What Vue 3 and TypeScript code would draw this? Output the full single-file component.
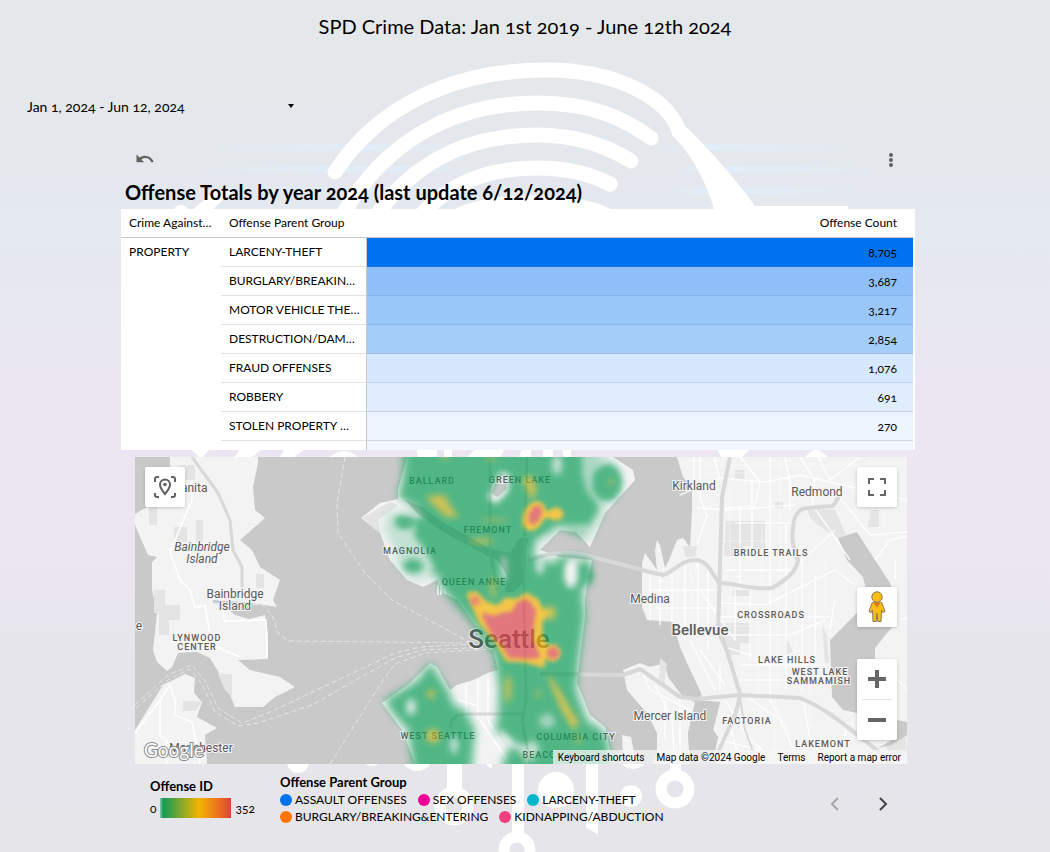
<script setup lang="ts">
interface OffenseRow {
  name: string
  count: string
  shade: string
}

interface LegendItem {
  name: string
  color: string
}

interface MapLabel {
  text: string
  x: number
  y: number
  kind: 'town' | 'area' | 'city' | 'big' | 'island'
}

const rows: OffenseRow[] = [
  { name: 'LARCENY-THEFT', count: '8,705', shade: '#0072f0' },
  { name: 'BURGLARY/BREAKIN…', count: '3,687', shade: '#8ebff8' },
  { name: 'MOTOR VEHICLE THE…', count: '3,217', shade: '#9ac7fa' },
  { name: 'DESTRUCTION/DAM…', count: '2,854', shade: '#a4cdf9' },
  { name: 'FRAUD OFFENSES', count: '1,076', shade: '#d6e8fd' },
  { name: 'ROBBERY', count: '691', shade: '#e0edfd' },
  { name: 'STOLEN PROPERTY …', count: '270', shade: '#ecf5fe' },
  { name: '', count: '', shade: '#f2f7ff' },
]

const legend: LegendItem[] = [
  { name: 'ASSAULT OFFENSES', color: '#0072f0' },
  { name: 'SEX OFFENSES', color: '#f10096' },
  { name: 'LARCENY-THEFT', color: '#00b6cb' },
  { name: 'BURGLARY/BREAKING&ENTERING', color: '#ff7300' },
  { name: 'KIDNAPPING/ABDUCTION', color: '#ef4080' },
]

const labels: MapLabel[] = [
  { text: 'Manita', x: 189, y: 492, kind: 'town' },
  { text: 'Bainbridge', x: 202, y: 551, kind: 'island' },
  { text: 'Island', x: 202, y: 563, kind: 'island' },
  { text: 'Bainbridge', x: 235, y: 598, kind: 'town' },
  { text: 'Island', x: 235, y: 610, kind: 'town' },
  { text: 'e', x: 139, y: 630, kind: 'town' },
  { text: 'LYNWOOD', x: 197, y: 641, kind: 'area' },
  { text: 'CENTER', x: 197, y: 650, kind: 'area' },
  { text: 'Manchester', x: 201, y: 752, kind: 'town' },
  { text: 'BALLARD', x: 432, y: 484, kind: 'area' },
  { text: 'GREEN LAKE', x: 520, y: 483, kind: 'area' },
  { text: 'FREMONT', x: 488, y: 533, kind: 'area' },
  { text: 'MAGNOLIA', x: 410, y: 554, kind: 'area' },
  { text: 'QUEEN ANNE', x: 474, y: 585, kind: 'area' },
  { text: 'Seattle', x: 509, y: 648, kind: 'big' },
  { text: 'WEST SEATTLE', x: 438, y: 739, kind: 'area' },
  { text: 'COLUMBIA CITY', x: 576, y: 740, kind: 'area' },
  { text: 'BEACON HILL', x: 556, y: 758, kind: 'area' },
  { text: 'Kirkland', x: 694, y: 490, kind: 'town' },
  { text: 'Redmond', x: 817, y: 496, kind: 'town' },
  { text: 'BRIDLE TRAILS', x: 771, y: 556, kind: 'area' },
  { text: 'Medina', x: 650, y: 603, kind: 'town' },
  { text: 'CROSSROADS', x: 771, y: 618, kind: 'area' },
  { text: 'Bellevue', x: 700, y: 635, kind: 'city' },
  { text: 'LAKE HILLS', x: 787, y: 663, kind: 'area' },
  { text: 'WEST LAKE', x: 820, y: 675, kind: 'area' },
  { text: 'SAMMAMISH', x: 819, y: 684, kind: 'area' },
  { text: 'Mercer Island', x: 670, y: 720, kind: 'town' },
  { text: 'FACTORIA', x: 747, y: 724, kind: 'area' },
  { text: 'LAKEMONT', x: 823, y: 747, kind: 'area' },
]
</script>

<template>
  <main class="report">
    <svg class="backdrop" viewBox="0 0 1050 852" aria-hidden="true">
      <defs>
        <linearGradient id="streak" x1="0" x2="1" y1="0" y2="0">
          <stop offset="0" stop-color="#e2edf9" stop-opacity="0" />
          <stop offset=".25" stop-color="#e2edf9" />
          <stop offset=".4" stop-color="#e2edf9" stop-opacity="0" />
          <stop offset=".7" stop-color="#e2edf9" stop-opacity="0" />
          <stop offset=".78" stop-color="#e2edf9" />
          <stop offset="1" stop-color="#e2edf9" stop-opacity="0" />
        </linearGradient>
      </defs>
      <g fill="url(#streak)">
        <rect x="210" y="144" width="640" height="7" />
        <rect x="200" y="166" width="680" height="7" />
        <rect x="220" y="187" width="640" height="7" />
      </g>
      <g fill="none" stroke="#fff" stroke-width="15" stroke-linecap="round">
        <path d="M335 172C377 108 450 70 547 70C614 70 663 96 677 126" />
        <path d="M342 216C385 140 455 103 537 103C590 103 622 117 651 138" />
        <path d="M376 216C415 160 470 135 537 135C574 135 604 144 631 161" />
        <path d="M420 216C450 182 490 168 537 168C566 168 589 173 610 184" />
        <path d="M455 217C480 205 505 203 535 203C565 203 590 206 610 217" />
      </g>
      <g fill="#fff">
        <path d="M670 128L683 124C708 148 735 178 755 206H848V212H715C706 180 690 152 672 135Z" />
        <circle cx="181" cy="213" r="8" />
        <path d="M190 212L216 190L236 188L210 212Z" />
        <path d="M191 449H210L201 459ZM240 449H262L250 459H233ZM285 449H305L292 459H278Z" />
        <path d="M328 459Q344 443 360 459ZM416 449H437V459H419ZM444 449H452V459H444ZM475 449H505L499 459H466ZM522 449H531V459H518ZM543 449H553V459H543ZM562 449H571V459H564ZM717 449H750L740 459H722ZM804 459Q816 441 829 459Z" />
        <circle cx="298" cy="762" r="11" />
        <circle cx="372" cy="754" r="12" />
        <circle cx="417" cy="755" r="16" />
        <rect x="447" y="760" width="15" height="32" />
        <path d="M480 760H492V769Z" />
        <rect x="512" y="760" width="12" height="74" />
        <circle cx="556" cy="790" r="18" />
        <path d="M586 760H598V834L586 828Z" />
        <circle cx="633" cy="754" r="15" />
        <circle cx="631" cy="796" r="11" />
        <rect x="670" y="760" width="11" height="18" />
      </g>
      <g fill="none" stroke="#fff" stroke-width="11">
        <circle cx="454" cy="806" r="14" />
        <circle cx="675" cy="789" r="14" />
        <circle cx="517" cy="850" r="13" />
      </g>
    </svg>

    <h1>SPD Crime Data: Jan 1st 2019 - June 12th 2024</h1>

    <button class="date-range" type="button">
      <span>Jan 1, 2024 - Jun 12, 2024</span>
      <svg width="6" height="4" viewBox="0 0 6 4" aria-hidden="true"><path d="M0 0H6L3 4Z" /></svg>
    </button>

    <section class="offenses">
      <div class="toolbar">
        <button type="button" aria-label="Undo drill">
          <svg width="20" height="20" viewBox="0 0 20 20" aria-hidden="true">
            <path d="M1.500 4.500V12.200H9.200L6.300 9.400C10 7 14 7.600 16.600 12.500L18.800 11.700C16 5.500 9.500 4 4.600 7.600Z" fill="#616161" />
          </svg>
        </button>
        <button type="button" aria-label="More options">
          <svg width="20" height="20" viewBox="0 0 20 20" fill="#616161" aria-hidden="true">
            <circle cx="10" cy="5" r="2" /><circle cx="10" cy="10" r="2" /><circle cx="10" cy="15" r="2" />
          </svg>
        </button>
      </div>
      <h2>Offense Totals by year 2024 (last update 6/12/2024)</h2>
      <div class="table-box">
        <table>
          <colgroup><col class="c1" /><col class="c2" /><col /></colgroup>
          <thead>
            <tr><th>Crime Against…</th><th>Offense Parent Group</th><th class="num">Offense Count</th></tr>
          </thead>
          <tbody>
            <tr v-for="(row, i) in rows" :key="i">
              <td v-if="i === 0" class="category" :rowspan="rows.length">PROPERTY</td>
              <td class="group">{{ row.name }}</td>
              <td class="num value" :style="{ backgroundColor: row.shade }">{{ row.count }}</td>
            </tr>
          </tbody>
        </table>
      </div>
    </section>

    <section class="map" aria-label="Offense heat map">
      <svg class="map-canvas" viewBox="135 457 772 307" role="img" aria-label="Map of Seattle">
        <defs>
          <filter id="soft" x="-20%" y="-20%" width="140%" height="140%"><feGaussianBlur stdDeviation="4" /></filter>
          <filter id="softer" x="-50%" y="-50%" width="200%" height="200%"><feGaussianBlur stdDeviation="3" /></filter>
          <filter id="edge" x="-50%" y="-50%" width="200%" height="200%"><feGaussianBlur stdDeviation="2" /></filter>
          <mask id="sparse" maskUnits="userSpaceOnUse" x="135" y="440" width="772" height="340">
            <rect x="135" y="440" width="772" height="340" fill="#fff" />
            <g fill="#000" filter="url(#softer)">
              <path d="M500 472L510 475L508 492L496 504L488 498Z" />
              <path d="M380 508L398 500L424 515L418 520L400 514L394 520L402 528L416 524L414 536L424 548L434 566L430 580L414 588L398 576L388 560L378 535Z" fill-opacity=".7" />
              <path d="M582 452H600L612 460L606 466L594 472L593 490L600 498L612 503L604 515L592 545L578 532L556 526L548 534L550 545L538 550L534 540L560 526L590 524L600 508L592 498L586 490L582 474Z" fill-opacity=".55" />
              <ellipse cx="557" cy="465" rx="5" ry="10" fill-opacity=".7" />
              <ellipse cx="571" cy="573" rx="7" ry="15" />
              <ellipse cx="577" cy="561" rx="9" ry="3" fill-opacity=".7" />
              <ellipse cx="504" cy="568" rx="3" ry="13" fill-opacity=".8" />
              <ellipse cx="540" cy="566" rx="4" ry="8" fill-opacity=".8" />
              <ellipse cx="411" cy="707" rx="5" ry="8" fill-opacity=".8" />
              <ellipse cx="454" cy="745" rx="4" ry="9" fill-opacity=".7" />
              <ellipse cx="547" cy="721" rx="8" ry="7" fill-opacity=".5" />
              <path d="M500 728L514 742L526 745L534 740L540 750L528 764L520 752L500 742Z" fill-opacity=".7" />
            </g>
          </mask>
        </defs>
        <rect x="135" y="457" width="772" height="307" fill="#c9c9c9" />
        <g fill="#f3f3f3">
          <path d="M170 457V490L147 507L135 514V525L148 555L157 557L164 550L152 562V590L157 613L153 650L157 662L167 671L172 667L178 653L197 652L210 658L225 683L235 707H263L275 697L295 687L280 677L250 670L238 660L268 659V633L265 615L249 619L235 615L222 604L213 603V600L245 602L277 607L273 600L280 580L260 567L252 550L240 540L265 518L255 510L253 487L258 463V457Z" />
          <path d="M135 730L163 685L185 674L195 678L194 693L202 702L197 717L217 728L205 735L207 764H135Z" />
          <path d="M407 457L398 490V499L380 503L361 518L380 533L390 560L407 580L423 587L437 580L443 593L457 600L493 650L498 670L488 673L473 680L457 685L450 690L437 667L430 663L410 683L382 703L402 730L415 764H613L605 727L590 715L577 683L585 617V597L592 560L560 557L540 550L560 530L576 532L590 547L605 513L635 480L633 470L613 457Z" />
          <path d="M677 457L683 477L692 487V510L690 547L683 538L677 540L669 560L665 568L660 545L657 540L655 550L657 570L645 553L642 563V607L647 620L673 622L680 647L687 663L695 680L702 695L697 700L720 702L713 730L718 737L712 764H907V457Z" />
          <path d="M623 670L640 663L650 667L665 663L668 677L683 697L695 702L688 733L690 764H652L657 755V733L647 713L638 703L627 690Z" />
          <path d="M622 735L631 737L635 757L623 755Z" />
        </g>
        <g fill="#e4e4e4">
          <path d="M180 465H195V480H180ZM149 505H157V525H149ZM196 520H203V542H196ZM174 527H187V542H174ZM154 590H165V605H180V620H169V635H159V613H154ZM218 674H232V697L225 690ZM183 701H202L196 711H183ZM256 574H264V588H256Z" />
          <path d="M726 521H765V550H752V546H743V556H724ZM683 546H697L695 557H685ZM807 508L835 510L846 535L838 538L825 530L810 518ZM870 510H879V527H868ZM718 623H751V643H740V655H727ZM785 636L795 656H785ZM660 658L667 664L664 685L659 680ZM775 502H783V508H775ZM822 625L827 635L829 663H825ZM735 470H745V480H735ZM733 590H750V596H733ZM885 745L905 730L907 754H890Z" />
          <path d="M362 518L390 502L398 505L378 520L380 533Z" />
        </g>
        <g fill="#c9c9c9">
          <path d="M838 538L857 532L875 560L890 583L897 600L892 627L875 648V660L857 713L843 710L832 697L830 640L860 610L866 589L863 577L847 560Z" />
          <path d="M700 703L720 702L713 730L718 737L712 764H690L688 733Z" />
          <path d="M878 748L892 740L897 720L907 722V735L892 745Z" />
          <path d="M500 473L508 476L506 490L497 497L491 493Z" />
          <path d="M404 499L424 508L442 522L466 535L490 549L510 553L520 538L529 538L522 560L524 582L513 592H505L507 575L497 560L480 552L440 530L416 512Z" />
        </g>
        <g fill="none" stroke="#fff" stroke-width="1.500" stroke-linejoin="round">
          <path d="M192 480V500L170 552L180 580L190 590L195 608L205 605L212 645L240 657M223 603L224 621L266 620L267 657M135 733L160 700L170 685L175 700V715L192 722L200 764M160 700V735L167 740V764M445 586V594M438 585V595M441 585V595" />
          <path stroke-opacity=".85" d="M694 457V480L707 515L697 545M700 457V500M714 457L720 480M680 495L720 478L765 482L800 475L907 500M740 457L760 482L755 506L725 508M697 508L730 510L795 505M770 457V585M752 480V560M740 506V590M800 457L815 480L812 505M818 457L830 480L860 457M838 495L870 535L907 532M790 480V510M785 457L793 500M735 523H790M695 570L700 560M725 570H795M786 525V690M770 555V700M750 590V660M735 590V640L700 590H650M650 575V620M660 575V625M672 575V622M685 563V640M698 565V635M708 565V650M690 640L715 690M700 650L725 685M650 590H715M655 608H718M720 603L765 605L835 570L855 585M720 617H830M720 635H790L825 620M728 648L750 655L765 665L800 650M740 665H825M740 680H828M802 560V690M815 575V680M835 600L830 630M797 565L835 530M875 560L890 540L907 536M812 505L830 530L850 560M720 665V690M745 695L780 720L800 764M770 700L790 735M803 698L810 740L830 764M725 700L750 740L780 764M730 725L740 764M680 696V750M655 685L672 720L675 764M640 665L650 690L690 710M665 700V740M720 740L760 750M847 723L840 764M895 560V580M900 620L907 618M880 660L907 690" />
          <path d="M488 678V720L500 740M478 680V720M466 685V760M488 715H500M480 720L510 764M458 700L476 705" />
        </g>
        <g fill="none" stroke="#fff" stroke-opacity=".45" stroke-width="1">
          <path d="M700 465H900M700 473H760M725 490H860M728 499H800M720 541H795M720 558H795M655 582H715M645 600H715M722 576H810M722 597H835M722 610H835M722 626H830M722 673H830M745 687H830M745 710H840M760 725H860M730 485V555M745 457V506M780 457V580M762 525V585M778 590V695M795 590V695M810 590V700M730 590V640M758 600V695M825 555V610M678 570V620M691 565V622M760 705V760M775 700V760M810 700V760M870 457V520M885 480V535" />
        </g>
        <g fill="none" stroke="#d8d8d8" stroke-width="4" stroke-linejoin="round">
          <path d="M192 457L218 493L230 520L233 550L242 567V587" stroke-width="3" />
          <path d="M528 561Q560 547 593 557L650 572L663 575C675 572 680 560 695 560C710 560 714 580 720 583C735 583 750 590 772 588C783 582 797 572 798 560C792 545 792 535 793 530C793 515 800 508 807 508L833 506L840 495" />
          <path d="M730 457L722 497L718 633C728 645 733 675 740 693C738 710 733 722 728 730L713 764" />
          <path d="M540 674L623 675L640 669L680 697L697 699L740 695L800 698C830 710 850 730 877 750L890 764" />
          <path d="M527 457L525 520L524 600L526 700L522 720L530 764M490 457V550L497 590M450 728Q450 713 470 714H526" stroke-width="3" />
          <path d="M740 697L745 730L758 764" stroke-width="2" />
        </g>
        <g fill="none" stroke="#e6e6e6" stroke-width="1" stroke-dasharray="5 3">
          <path d="M345 457L337 503L338 533L365 573L392 600L460 637L474 645" />
          <path d="M245 604L263 605L273 617L278 633L288 641L470 643" />
          <path d="M135 705L168 675L192 665L205 681L218 708L242 723L268 713L395 653L420 647L475 644" />
          <path d="M136 708L168 680L190 669L202 684L215 712L238 726L258 723L312 705L395 658L422 650L490 647" />
          <path d="M330 764L385 677L395 664L425 653L493 649" />
        </g>
        <g class="labels">
          <text v-for="(l, i) in labels" :key="i" :x="l.x" :y="l.y" :class="l.kind">{{ l.text }}</text>
        </g>
        <g opacity=".7">
          <g mask="url(#sparse)">
            <path d="M404 440L403 475L398 498L421 510L388 512L384 530L395 550L397 563L414 580L437 573L440 586L453 602L473 624L494 655L499 690L498 715L495 732L512 742L502 764V790H614L608 741L600 727L588 722L576 690L579 660L585 615L582 590L592 580L590 560L578 556L562 556L552 563L535 558L533 549L558 526L587 539L600 518L604 503L613 499L622 485L618 469L602 458L590 440Z" fill="#0f9d58" filter="url(#soft)" />
            <path d="M430 662L418 680L400 691L385 700L393 714L408 730L416 790H470L475 730L466 711L453 704L448 690Z" fill="#0f9d58" filter="url(#soft)" />
          </g>
          <g fill="#0f9d58" filter="url(#softer)">
            <ellipse cx="405" cy="524" rx="9" ry="4" />
            <ellipse cx="413" cy="566" rx="10" ry="7" />
            <ellipse cx="588" cy="576" rx="4" ry="7" />
            <ellipse cx="608" cy="483" rx="12" ry="16" />
          </g>
          <g fill="#f4b400" filter="url(#edge)" stroke="#f4b400" stroke-width="3" stroke-linejoin="round">
            <path d="M468 594L476 593L486 603L497 607L506 599L518 600L526 594L537 600L542 610L548 612L541 622L541 636L546 646L543 666L525 661L507 660L495 640L480 622Z" />
            <circle cx="552" cy="653" r="7" />
            <ellipse cx="534" cy="516" rx="9" ry="14" transform="rotate(25 534 516)" />
            <ellipse cx="556" cy="514" rx="6" ry="5" />
            <path d="M540 512H552V517H540Z" />
          </g>
          <g fill="#f4b400" fill-opacity=".75" filter="url(#softer)">
            <path d="M426 496L445 495L451 507L459 517L446 517L433 505Z" />
            <path d="M522 478L532 476L537 490L532 501L527 490Z" />
            <ellipse cx="550" cy="613" rx="6" ry="7" />
            <ellipse cx="482" cy="541" rx="12" ry="3" fill-opacity=".6" />
            <ellipse cx="495" cy="520" rx="14" ry="2" fill-opacity=".4" />
            <ellipse cx="493" cy="588" rx="3" ry="12" fill-opacity=".5" />
            <ellipse cx="508" cy="689" rx="4" ry="14" fill-opacity=".6" />
            <path d="M549 677L558 690L570 711L577 721L574 728L563 710Z" stroke="#f4b400" stroke-width="2" />
            <circle cx="433" cy="736" r="7" />
            <circle cx="431" cy="694" r="4" />
            <ellipse cx="538" cy="694" rx="3" ry="5" fill-opacity=".4" />
            <ellipse cx="578" cy="739" rx="3" ry="6" fill-opacity=".4" />
            <circle cx="611" cy="482" r="3" fill-opacity=".5" />
            <ellipse cx="445" cy="457" rx="4" ry="2" />
            <ellipse cx="491" cy="458" rx="4" ry="2" />
          </g>
          <g fill="#db444e" filter="url(#edge)">
            <path d="M484 615L494 618L504 614L512 614L519 603L527 601L534 611L532 625L531 640L538 656L528 657L510 656L504 645L494 635Z" stroke="#db444e" stroke-width="4" stroke-linejoin="round" />
            <circle cx="553" cy="653" r="6" />
            <ellipse cx="535" cy="515" rx="6" ry="10" transform="rotate(25 535 515)" />
            <circle cx="475" cy="601" r="5" fill-opacity=".75" />
          </g>
        </g>
        <text class="logo" x="144" y="757">Google</text>
      </svg>

      <button class="tile locate" type="button" aria-label="Reset map position">
        <svg width="24" height="24" viewBox="0 0 24 24" fill="none" stroke="#616161" stroke-width="2" aria-hidden="true">
          <path d="M2 7V4Q2 2 4 2H6M18 2H20Q22 2 22 4V7M22 18V20Q22 22 20 22H18M6 22H4Q2 22 2 20V18" />
          <path d="M12 19Q7 13 7 9.500A5 5 0 0 1 17 9.500Q17 13 12 19Z" />
          <circle cx="12" cy="9.500" r="1.800" fill="#616161" stroke="none" />
        </svg>
      </button>
      <div class="side">
        <button class="tile" type="button" aria-label="Toggle fullscreen view">
          <svg width="18" height="18" viewBox="0 0 18 18" fill="#666" aria-hidden="true">
            <path d="M0 0V6H2V2H6V0ZM12 0V2H16V6H18V0ZM16 12V16H12V18H18V12ZM2 12H0V18H6V16H2Z" />
          </svg>
        </button>
        <div class="side-bottom">
          <button class="tile" type="button" aria-label="Street View">
            <svg width="18" height="32" viewBox="0 0 18 32" aria-hidden="true">
              <path d="M4 12L1 20.500L3.300 21.500L4.500 19L5 30.500H8.200L9 22L9.800 30.500H13L13.500 19L14.700 21.500L17 20.500L14 12Q12 10.500 9 10.500Q6 10.500 4 12Z" fill="#fbbc18" stroke="#8a7a55" stroke-width="1" />
              <path d="M5.500 11.500H12.500L9 16.500Z" fill="#e2711d" />
              <circle cx="9" cy="6" r="5.200" fill="#fbbc18" stroke="#8a7a55" stroke-width="1" />
            </svg>
          </button>
          <div class="zoom">
            <button type="button" aria-label="Zoom in">
              <svg width="18" height="18" viewBox="0 0 18 18" aria-hidden="true"><path d="M7 0H11V7H18V11H11V18H7V11H0V7H7Z" fill="#666" /></svg>
            </button>
            <button type="button" aria-label="Zoom out">
              <svg width="18" height="18" viewBox="0 0 18 18" aria-hidden="true"><path d="M0 7H18V11H0Z" fill="#666" /></svg>
            </button>
          </div>
        </div>
      </div>
      <div class="credits">
        <button type="button">Keyboard shortcuts</button>
        <span>Map data ©2024 Google</span>
        <a href="#terms">Terms</a>
        <a href="#report">Report a map error</a>
      </div>
    </section>

    <footer class="legend">
      <div class="scale">
        <h3>Offense ID</h3>
        <div class="scale-row"><span>0</span><i class="ramp"></i><span>352</span></div>
      </div>
      <div class="groups">
        <h3>Offense Parent Group</h3>
        <ul>
          <li v-for="item in legend" :key="item.name">
            <i class="dot" :style="{ backgroundColor: item.color }"></i>{{ item.name }}
          </li>
        </ul>
      </div>
      <nav class="pager" aria-label="Legend pages">
        <button type="button" aria-label="Previous" disabled>
          <svg width="24" height="24" viewBox="0 0 24 24" fill="none" stroke="#a5a5a8" stroke-width="2" aria-hidden="true"><path d="M15 6L9 12L15 18" /></svg>
        </button>
        <button type="button" aria-label="Next">
          <svg width="24" height="24" viewBox="0 0 24 24" fill="none" stroke="#444" stroke-width="2" aria-hidden="true"><path d="M9 6L15 12L9 18" /></svg>
        </button>
      </nav>
    </footer>
  </main>
</template>

<style>
body {
  margin: 0;
}
</style>

<style scoped>
.report {
  position: relative;
  overflow: hidden;
  box-sizing: border-box;
  min-height: 100vh;
  color: #000;
  font-family: Lato, "Liberation Sans", sans-serif;
  font-size: 12px;
  font-variant-numeric: oldstyle-nums;
  background: linear-gradient(#e5e8eb 0, #e4e8eb 100px, #e4e8f0 240px, #e8e7f2 340px, #ece6f2 420px, #eae6f1 560px, #e6e5eb 660px, #e5e5ea 100%);
}
.backdrop {
  position: absolute;
  top: 0;
  left: 0;
  width: 100%;
}
button {
  display: flex;
  align-items: center;
  justify-content: center;
  margin: 0;
  padding: 0;
  border: 0;
  background: none;
  color: inherit;
  font: inherit;
}
svg {
  display: block;
}
h1 {
  position: relative;
  margin: 0;
  padding-top: 11px;
  font-size: 20px;
  font-weight: 400;
  line-height: 30px;
  text-align: center;
}
.date-range {
  position: relative;
  justify-content: space-between;
  width: 267px;
  height: 30px;
  margin: 50px 0 0 27px;
  font-size: 14px;
  font-variant-numeric: oldstyle-nums;
}
.offenses {
  position: relative;
  margin: 29px 135px 0 121px;
}
.toolbar {
  display: flex;
  justify-content: space-between;
  padding: 0 14px;
}
h2 {
  margin: 0;
  padding: 9px 4px 4px;
  font-size: 20px;
  font-weight: 700;
  line-height: 26px;
}
.table-box {
  box-sizing: border-box;
  height: 241px;
  padding-right: 2px;
  overflow: hidden;
  background: #fff;
}
table {
  width: 100%;
  table-layout: fixed;
  border-collapse: separate;
  border-spacing: 0;
}
.c1 {
  width: 100px;
}
.c2 {
  width: 146px;
}
th,
td {
  box-sizing: border-box;
  height: 29px;
  padding: 0 8px;
  overflow: hidden;
  font-weight: 400;
  line-height: 16px;
  text-align: left;
  white-space: nowrap;
}
th {
  border-bottom: 1px solid #c8c8c8;
}
.category {
  padding-top: 6px;
  vertical-align: top;
}
.group {
  border-right: 1px solid #c8c8c8;
  border-bottom: 1px solid #e2e2e2;
}
.num {
  padding-right: 16px;
  text-align: right;
}
.value {
  padding-top: 2px;
  border-bottom: 1px solid rgba(120, 140, 170, 0.25);
}
.map {
  position: relative;
  margin: 7px 143px 0 135px;
}
.map-canvas {
  width: 100%;
  height: auto;
}
.labels text {
  fill: #5a5a5a;
  stroke: #f5f5f5;
  stroke-width: 2px;
  paint-order: stroke;
  font-family: Roboto, sans-serif;
  text-anchor: middle;
}
.labels .town {
  font-size: 12px;
}
.labels .island {
  font-size: 12px;
  font-style: italic;
}
.labels .area {
  font-size: 9px;
  font-weight: 500;
  letter-spacing: 1px;
}
.labels .city {
  font-size: 15px;
  font-weight: 500;
}
.labels .big {
  font-size: 26px;
  font-weight: 500;
}
.logo {
  fill: #fff;
  stroke: #888;
  stroke-width: 2px;
  paint-order: stroke;
  font-family: Lato, sans-serif;
  font-size: 19px;
  font-weight: 400;
}
.tile,
.zoom {
  width: 40px;
  border-radius: 2px;
  background: #fff;
  box-shadow: 0 1px 4px -1px rgba(0, 0, 0, 0.3);
}
.tile {
  height: 40px;
}
.locate {
  position: absolute;
  top: 10px;
  left: 10px;
}
.side {
  position: absolute;
  top: 10px;
  right: 10px;
  bottom: 24px;
  display: flex;
  flex-direction: column;
  justify-content: space-between;
}
.side-bottom {
  display: flex;
  flex-direction: column;
  gap: 32px;
}
.zoom button {
  width: 40px;
  height: 40px;
}
.zoom button + button::before {
  content: "";
  position: absolute;
  width: 30px;
  height: 1px;
  margin-bottom: 40px;
  background: #e6e6e6;
}
.zoom button + button {
  height: 41px;
}
.credits {
  position: absolute;
  right: 0;
  bottom: 0;
  display: flex;
  gap: 12px;
  padding: 1px 6px 0 5px;
  background: rgba(245, 245, 245, 0.75);
  font-family: Roboto, sans-serif;
  font-size: 10px;
  font-variant-numeric: normal;
  line-height: 13px;
  white-space: nowrap;
}
.credits a {
  color: #000;
  text-decoration: none;
}
.legend {
  position: relative;
  display: flex;
  align-items: flex-start;
  margin: 0 155px 0 150px;
  padding-top: 10px;
  line-height: 17px;
}
h3 {
  margin: 0;
  font-size: 13px;
  font-weight: 700;
  line-height: 17px;
}
.scale {
  width: 130px;
  padding-top: 4px;
}
.scale-row {
  display: flex;
  align-items: center;
  gap: 4px;
  padding-top: 3px;
}
.ramp {
  width: 71px;
  height: 20px;
  background: linear-gradient(90deg, #8fc9ad 0, #0f9d58 3px, #f4b400 55%, #ea6a24 85%, #db4437);
}
.groups {
  flex: 0 1 400px;
}
ul {
  display: flex;
  flex-wrap: wrap;
  column-gap: 11px;
  margin: 0;
  padding: 0;
  list-style: none;
}
li {
  display: flex;
  align-items: center;
  gap: 3px;
  line-height: 17px;
}
.dot {
  width: 12px;
  height: 12px;
  border-radius: 50%;
}
.pager {
  display: flex;
  gap: 24px;
  margin-left: auto;
  padding-top: 18px;
}
</style>
